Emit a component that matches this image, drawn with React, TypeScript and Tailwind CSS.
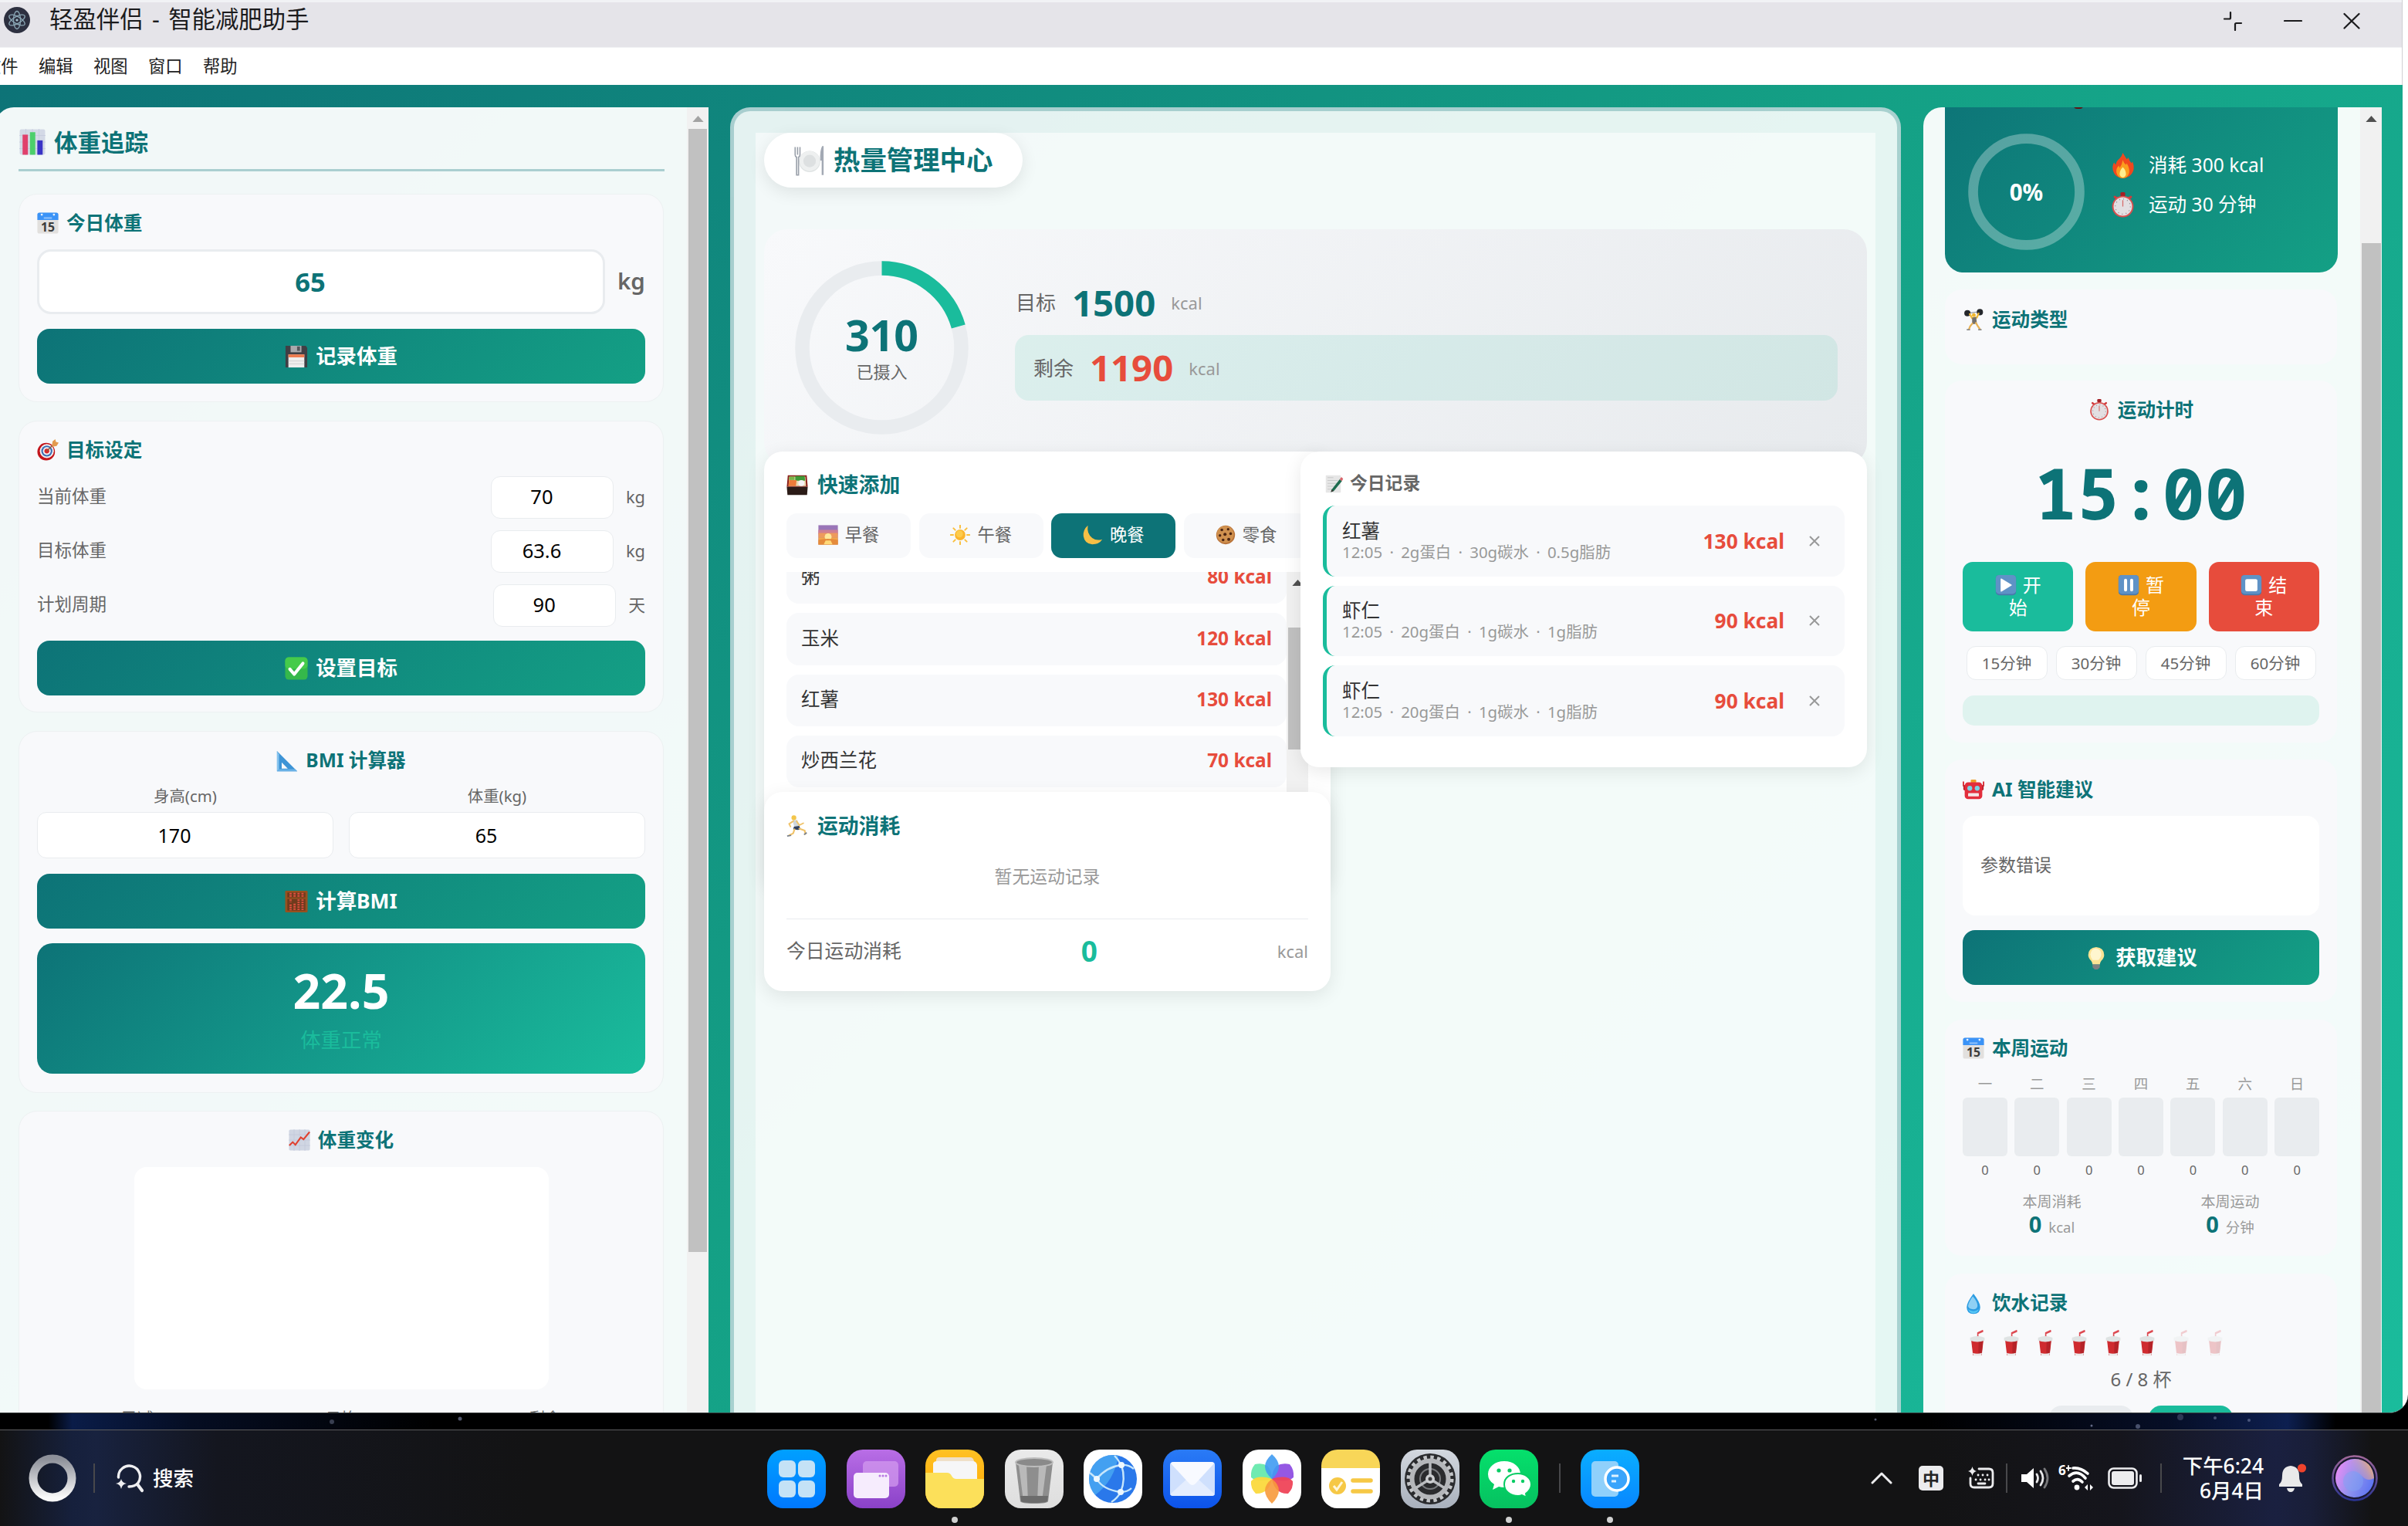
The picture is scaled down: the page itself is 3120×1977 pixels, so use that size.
import React from 'react'
import clsx from 'clsx'

/* ---------- emoji style glyphs ---------- */

type GlyphName =
  | 'bars' | 'calendar' | 'floppy' | 'target' | 'check' | 'ruler' | 'abacus' | 'trend'
  | 'plate' | 'bento' | 'sunrise' | 'sun' | 'moon' | 'cookie' | 'runner' | 'memo'
  | 'fire' | 'stopwatch' | 'lifter' | 'play' | 'pause' | 'stop' | 'robot' | 'bulb' | 'drop' | 'cup'

const BlueKey = ({ children }: { children: React.ReactNode }) => (
  <>
    <rect x="1" y="1" width="30" height="30" rx="5" fill="#4a78ab" />
    <rect x="1" y="1" width="30" height="28" rx="5" fill="#5f92c6" />
    {children}
  </>
)

const glyphs: Record<GlyphName, React.ReactNode> = {
  bars: (
    <>
      <rect x="0.5" y="0.5" width="31" height="31" rx="2" fill="#d3d9e6" />
      <path d="M0 8h32M0 16h32M0 24h32M8 0v32M16 0v32M24 0v32" stroke="#c2c9da" strokeWidth="0.7" />
      <rect x="4" y="7" width="6.5" height="24.5" fill="#e0406c" />
      <rect x="13" y="4" width="6.5" height="27.5" fill="#4ccf6b" />
      <rect x="22" y="14" width="6.5" height="17.5" fill="#3a34c6" />
    </>
  ),
  calendar: (
    <>
      <rect x="0.5" y="0.5" width="31" height="31" rx="3" fill="#e2e0de" />
      <path d="M.5 11.500v-8a3 3 0 0 1 3-3h25a3 3 0 0 1 3 3v8Z" fill="#3b93f7" />
      <circle cx="7" cy="3.5" r="1.6" fill="#e6f1fd" />
      <circle cx="25" cy="3.5" r="1.6" fill="#e6f1fd" />
      <path d="M10 8.500h12" stroke="#8cc0fa" strokeWidth="2.4" />
      <text x="16" y="28" textAnchor="middle" fontSize="18" fontWeight="700" fill="#3c3c3c">15</text>
    </>
  ),
  floppy: (
    <>
      <path d="M1 1h28l2 3v27H1Z" fill="#403f45" />
      <rect x="8" y="1" width="15" height="9" fill="#a9a9ad" />
      <rect x="17" y="2" width="4" height="6" fill="#55555a" />
      <rect x="5" y="13" width="22" height="18" fill="#f0eeee" />
      <rect x="5" y="13" width="22" height="4" fill="#ee7a4e" />
      <path d="M5 22h22M5 26h22" stroke="#c9c9c9" strokeWidth="0.8" />
    </>
  ),
  target: (
    <>
      <circle cx="13.5" cy="18.5" r="13" fill="#c3161c" />
      <circle cx="14.5" cy="17.5" r="10.4" fill="#f3f0f0" />
      <circle cx="14.5" cy="17.5" r="8.2" fill="#3b6fb5" />
      <circle cx="14.5" cy="17.5" r="5.8" fill="#f3f0f0" />
      <circle cx="14.5" cy="17.5" r="3.6" fill="#d8262c" />
      <path d="M14 18 26 6" stroke="#8d5a3a" strokeWidth="1.6" />
      <path d="m22 9 1-6 4-3 1 4 4 1-3 5-6 1Z" fill="#e39a4e" />
    </>
  ),
  check: (
    <>
      <rect x="0.5" y="0.5" width="31" height="31" rx="5" fill="#35b84b" />
      <rect x="0.5" y="0.5" width="31" height="16" rx="5" fill="#45cb4b" />
      <path d="m7 17 6 7L25 9" fill="none" stroke="#fff" strokeWidth="4.4" strokeLinecap="round" strokeLinejoin="round" />
    </>
  ),
  ruler: (
    <>
      <path d="M1 1v30h30Z" fill="#3d94d6" />
      <path d="M1 1v30l3-3V6Z" fill="#86c4ee" />
      <path d="M8 18v9h9Z" fill="#f8f9fb" />
      <path d="M1 31h30l-3-3H4Z" fill="#69b1e6" />
    </>
  ),
  abacus: (
    <>
      <rect x="0.5" y="1" width="31" height="30" rx="1.5" fill="#97511f" />
      <rect x="3.5" y="3.5" width="25" height="25" fill="#6f3b1d" />
      <path d="M8 4v6M13.500 4v6M19 4v6M24.500 4v6M8 13v4M13.500 19v9M19 13v15M24.500 13v15M8 20v8" stroke="#e0503f" strokeWidth="3" strokeDasharray="2 1.2" />
      <path d="M3 11.300h26" stroke="#97511f" strokeWidth="2" />
    </>
  ),
  trend: (
    <>
      <rect x="0.5" y="0.5" width="31" height="31" rx="2" fill="#d0d6e3" />
      <path d="M0 8h32M0 16h32M0 24h32M8 0v32M16 0v32M24 0v32" stroke="#bfc7d8" strokeWidth="0.7" />
      <path d="m1 24 5-5 4 4 8-11 4 3 9-11" fill="none" stroke="#e0402f" strokeWidth="2.4" />
    </>
  ),
  plate: (
    <>
      <circle cx="16" cy="17" r="11" fill="#dfe3e3" />
      <circle cx="16" cy="16.5" r="10.4" fill="#eef0f0" />
      <circle cx="16" cy="16.5" r="6.5" fill="#dde0e1" />
      <path d="M1 2v8q0 2 1.500 2.500V31h2V12.500Q6 12 6 10V2M3.500 2v8" fill="none" stroke="#9aa0aa" strokeWidth="1.3" />
      <path d="M29 1q-2.500 4-2 15h1.500v15h2V1Z" fill="#a3a9b4" />
    </>
  ),
  bento: (
    <>
      <path d="M2 2h28l1.500 17H.5Z" fill="#8a1f1a" />
      <path d="M.5 19h31l-1 12h-29Z" fill="#2b1b17" />
      <path d="M4 4h24l1 14H3Z" fill="#e9d9b0" />
      <path d="M13 3h14l.5 7H13Z" fill="#3e9a36" />
      <path d="M4 9h11l-1 9H3Z" fill="#ee7c3a" />
      <circle cx="22" cy="13.5" r="4.5" fill="#f4f1f4" />
      <path d="M4 4h8v5H4Z" fill="#79b548" />
    </>
  ),
  sunrise: (
    <>
      <rect x="0.5" y="0.5" width="31" height="31" fill="#9a76b8" />
      <rect x="0.5" y="8" width="31" height="7" fill="#cf7f92" />
      <rect x="0.5" y="13" width="31" height="7" fill="#ee9a5c" />
      <rect x="0.5" y="20" width="31" height="11.5" fill="#f4a648" />
      <circle cx="16" cy="19" r="5.5" fill="#ffe89a" />
      <path d="M.5 24q15-4 31 0v7.500H.5Z" fill="#e58b3b" />
      <path d="M12 25h8l3 6H9Z" fill="#ffd978" />
    </>
  ),
  sun: (
    <>
      <circle cx="16" cy="16" r="8.5" fill="#fbb52c" />
      <circle cx="15" cy="14.5" r="5.5" fill="#fdcb4c" />
      <path d="M16 1v4M16 27v4M1 16h4M27 16h4M5.400 5.400l2.800 2.800M23.800 23.800l2.800 2.800M26.600 5.400l-2.800 2.800M8.200 23.800l-2.800 2.800" stroke="#f9bf3d" strokeWidth="2.4" strokeLinecap="round" />
    </>
  ),
  moon: <path d="M8 1Q0 8 1 18q2 12 14 13 11 0 16-8-9 3-16-2Q6 14 8 1Z" fill="#f6bf45" />,
  cookie: (
    <>
      <circle cx="16" cy="16" r="15" fill="#b9733a" />
      <circle cx="15.5" cy="15" r="13.5" fill="#d0914f" />
      <g fill="#4c2613">
        <circle cx="10" cy="8" r="2.2" /><circle cx="20" cy="7" r="2" /><circle cx="7" cy="17" r="2.1" />
        <circle cx="15" cy="15" r="2.5" /><circle cx="24" cy="14" r="2.2" /><circle cx="12" cy="24" r="2.2" /><circle cx="21" cy="23" r="2.5" />
      </g>
    </>
  ),
  runner: (
    <>
      <circle cx="11" cy="4" r="3.6" fill="#f3c64b" />
      <path d="m9 8 7-1 3 10-7 2Z" fill="#cfd6dc" />
      <path d="m10 9-6 4 2 4M15 9l4 6 6-3" fill="none" stroke="#f0c36a" strokeWidth="2.2" strokeLinecap="round" />
      <path d="m11 17 8-1 2 5-4 1-7-1Z" fill="#32405e" />
      <path d="m19 20 8 3 1 5M12 21l-2 6-6 3" fill="none" stroke="#f0c36a" strokeWidth="2.4" strokeLinecap="round" />
      <path d="m26 29 4-3M1 31l6-1" stroke="#777f8c" strokeWidth="2" />
    </>
  ),
  memo: (
    <>
      <rect x="1" y="1" width="26" height="30" rx="1" fill="#e6e6e6" />
      <path d="M4 5h10M4 10h18M4 15h16M4 20h12M4 25h14" stroke="#c6c6c6" strokeWidth="1.2" />
      <path d="m11 26 14-18 4 3-14 17-5 2Z" fill="#1d6b4e" />
      <path d="m25 8 3-4 3 3-2 4Z" fill="#d9636a" />
      <path d="m11 26-1 4 5-2Z" fill="#3a3330" />
    </>
  ),
  fire: (
    <>
      <path d="M16 0q3 5 5 8l2-2q1 4 4 7l1-2q3 6 1 12-3 8-13 9Q6 31 4 23q-2-6 1-11l2 3q1-5 5-8 3-3 4-7Z" fill="#f0481e" />
      <path d="M16 9q1 4 4 6l1-2q4 7 3 12-2 7-8 7T8 25q-1-5 3-9l1 3q3-4 4-10Z" fill="#fb9d1e" />
      <path d="M16 18q4 4 4 9-1 4-4 4t-4-4q0-5 4-9Z" fill="#ffee8e" />
    </>
  ),
  stopwatch: (
    <>
      <rect x="13" y="0" width="6" height="5" rx="1.5" fill="#a32025" />
      <path d="m6 6 3 2M26 6l-3 2" stroke="#cf3a3c" strokeWidth="3" strokeLinecap="round" />
      <circle cx="16" cy="18" r="13.5" fill="#d8504f" />
      <circle cx="16" cy="18" r="11.6" fill="#e3dfe2" />
      <circle cx="16" cy="18" r="9.5" fill="none" stroke="#8f8c90" strokeWidth="1.2" strokeDasharray="1 4" />
      <path d="M16 18V10" stroke="#d66a68" strokeWidth="1.2" />
    </>
  ),
  lifter: (
    <>
      <path d="M5 7 27 4" stroke="#8a8f96" strokeWidth="1.4" />
      <circle cx="7" cy="6.5" r="4.6" fill="#24272c" />
      <circle cx="25.5" cy="5" r="4.6" fill="#24272c" />
      <path d="m10 7 4 7 7-1 3-7" fill="none" stroke="#efb83a" strokeWidth="2.6" />
      <circle cx="16.5" cy="9.5" r="2.8" fill="#f0b62f" />
      <path d="m14 13 6-1 1 10-7 1Z" fill="#74706c" />
      <path d="m15 21-4 5-2 5M19 20l3 5 4 6" fill="none" stroke="#e8b357" strokeWidth="2.6" />
      <path d="M6 31h5M23 31h5" stroke="#8c8c8c" strokeWidth="1.8" />
    </>
  ),
  play: <BlueKey><path d="M9 7v18l15-9Z" fill="#fff" stroke="#fff" strokeWidth="1.5" strokeLinejoin="round" /></BlueKey>,
  pause: <BlueKey><path d="M11.500 9v14M20.500 9v14" stroke="#fff" strokeWidth="4.6" strokeLinecap="round" /></BlueKey>,
  stop: <BlueKey><rect x="7" y="7" width="18" height="18" rx="2.5" fill="#fff" /></BlueKey>,
  robot: (
    <>
      <rect x="12" y="1" width="8" height="5" rx="1.5" fill="#f0a02c" />
      <path d="M1 4v7M31 4v7" stroke="#d9313a" strokeWidth="2.4" />
      <rect x="1" y="9" width="30" height="8" rx="2" fill="#b9202b" />
      <rect x="3" y="5" width="26" height="25" rx="5" fill="#e22e3c" />
      <circle cx="10.5" cy="14" r="3.6" fill="#79d3e6" />
      <circle cx="21.5" cy="14" r="3.6" fill="#79d3e6" />
      <rect x="8" y="21" width="16" height="5" rx="1" fill="#f4e6e6" />
    </>
  ),
  bulb: (
    <>
      <path d="M16 1q11 1 11 11 0 4-4 8-2 3-2 5H11q0-2-2-5-4-4-4-8Q5 2 16 1Z" fill="#fbe394" />
      <path d="M15 3q8 1 8 8 0 4-4 8H11q-3-4-3-8 1-7 7-8Z" fill="#fff6cf" />
      <path d="M11 25h10v4l-3 3h-4l-3-3Z" fill="#7d7f80" />
    </>
  ),
  drop: (
    <>
      <path d="M16 1q10 13 10 20 0 10-10 10T6 21Q6 14 16 1Z" fill="#2b9ce2" />
      <path d="M15 5q7 8 7 14-1 6-8 5-6-1-6-5 1-6 7-14Z" fill="#8fd0f4" />
      <path d="M8 24q8 6 16 0-2 6-8 6t-8-6Z" fill="#56c6f5" />
    </>
  ),
  cup: (
    <>
      <path d="M17 12V4l11-3" fill="none" stroke="#dd4a52" strokeWidth="2.6" />
      <path d="M3 11h26l-4 20H7Z" fill="#cf2b2f" />
      <path d="M19 11h9l-3 19h-7Z" fill="#b52328" />
      <path d="M1 9.500q15-4 30 0V13q-15 3-30 0Z" fill="#dfe3e3" />
      <path d="M6.500 28q9 2 19 0l-1 3.500H8Z" fill="#eceaea" />
    </>
  ),
}

const Glyph = ({ name, className }: { name: GlyphName; className?: string }) => (
  <svg viewBox="0 0 32 32" preserveAspectRatio="none" className={clsx('shrink-0', className ?? 'h-7 w-7')}>
    {glyphs[name]}
  </svg>
)

/* ---------- shared pieces ---------- */

const Heading = ({ icon, children, className }: { icon: GlyphName; children: React.ReactNode; className?: string }) => (
  <h3 className={clsx('flex shrink-0 items-center gap-[10px] text-[24.6px] leading-none font-bold text-[#0d7377]', className)}>
    <Glyph name={icon} />
    <span>{children}</span>
  </h3>
)

const PrimaryButton = ({ icon, children }: { icon: GlyphName; children: React.ReactNode }) => (
  <button
    type="button"
    className="flex h-[71px] w-full shrink-0 items-center justify-center gap-[10px] rounded-[16px] bg-linear-[135deg,#0d7377,#14a085] text-[26.4px] leading-none font-bold text-white"
  >
    <Glyph name={icon} className="h-[30px] w-[30px]" />
    {children}
  </button>
)

const Triangle = ({ className }: { className: string }) => (
  <svg viewBox="0 0 16 9" className={clsx('h-2 w-[15px]', className)}>
    <path d="M0 9 8 0l8 9Z" fill="currentColor" />
  </svg>
)

/* ---------- window chrome ---------- */

const menus = ['文件', '编辑', '视图', '窗口', '帮助']

function TitleBar() {
  return (
    <header className="w-[3113px] shrink-0 border-r border-[#cfcfd3]">
      <div className="flex h-[62px] items-start border-t-[3px] border-b border-[#f1f2f5] bg-[#e5e4e9] pl-[5px] text-[#1b1b1d]">
        <svg viewBox="0 0 34 34" className="mt-[6px] h-[34px] w-[34px]">
          <circle cx="17" cy="17" r="17" fill="#2d3040" />
          <g fill="none" stroke="#8aa6b4" strokeWidth="1.3">
            <ellipse cx="17" cy="17" rx="4.5" ry="11.5" />
            <ellipse cx="17" cy="17" rx="4.5" ry="11.5" transform="rotate(60 17 17)" />
            <ellipse cx="17" cy="17" rx="4.5" ry="11.5" transform="rotate(-60 17 17)" />
          </g>
          <circle cx="17" cy="17" r="1.6" fill="#a5c3cf" />
        </svg>
        <h1 className="ml-[25px] flex h-[45px] items-center text-[30.4px] leading-none [word-spacing:3.5px]">轻盈伴侣 - 智能减肥助手</h1>
        <div className="mt-[11px] mr-[54px] ml-auto flex items-center gap-[53px]">
          <svg viewBox="0 0 26 26" className="h-[26px] w-[26px]" fill="none" stroke="#1b1b1d" strokeWidth="2.2" strokeLinecap="round">
            <path d="M2 10.500h6.500a1.500 1.500 0 0 0 1.500-1.500V2M24 16h-6.500a1.500 1.500 0 0 0-1.500 1.500V25" />
          </svg>
          <svg viewBox="0 0 24 26" className="h-[26px] w-6" stroke="#1b1b1d" strokeWidth="2.2" strokeLinecap="round">
            <path d="M1 13h22" />
          </svg>
          <svg viewBox="0 0 22 26" className="h-[26px] w-[22px]" stroke="#1b1b1d" strokeWidth="2.2" strokeLinecap="round">
            <path d="m1.500 4 19 18.500M20.500 4l-19 18.500" />
          </svg>
        </div>
      </div>
      <nav className="flex h-12 items-center overflow-hidden bg-white text-[22.3px] leading-none text-[#222]">
        <ul className="-ml-[21px] flex gap-[26.4px]">
          {menus.map((m) => (
            <li key={m} className="shrink-0">{m}</li>
          ))}
        </ul>
      </nav>
    </header>
  )
}

/* ---------- left: weight tracking ---------- */

const goals = [
  { label: '当前体重', value: '70', unit: 'kg' },
  { label: '目标体重', value: '63.6', unit: 'kg' },
  { label: '计划周期', value: '90', unit: '天' },
]

const card = 'flex w-[836px] shrink-0 flex-col rounded-[24px] border border-[#edf1f2] bg-[#f8f9fb] px-[23px]'

function WeightPanel() {
  return (
    <section className="-ml-[6px] flex w-[924px] shrink-0 overflow-hidden rounded-tl-[24px] bg-white/95">
      <div className="flex w-[896px] flex-col pl-[30px]">
        <h2 className="flex h-[83px] w-[837px] shrink-0 items-center gap-[11px] border-b-[3px] border-[#aacfd0] pt-[10px] text-[30.5px] leading-none font-bold text-[#0d7377]">
          <Glyph name="bars" className="ml-[1px] h-[34px] w-[34px]" />
          体重追踪
        </h2>

        <div className={clsx(card, 'mt-[29px] h-[270px]')}>
          <Heading icon="calendar" className="h-[71px] pt-[3px]">今日体重</Heading>
          <div className="flex items-center">
            <div className="flex h-[84px] w-[736px] items-center justify-center rounded-[18px] border-[3px] border-[#e9ecef] bg-white pr-[28px] text-[34.5px] leading-none font-bold text-[#0d7377]">
              65
            </div>
            <span className="ml-4 pb-[2px] text-[29.5px] leading-none font-semibold text-[#666]">kg</span>
          </div>
          <div className="mt-[19px]">
            <PrimaryButton icon="floppy">记录体重</PrimaryButton>
          </div>
        </div>

        <div className={clsx(card, 'mt-6 h-[378px]')}>
          <Heading icon="target" className="h-[71px] pt-[3px]">目标设定</Heading>
          <div className="flex flex-col gap-[15px]">
            {goals.map((g) => (
              <div key={g.label} className="flex h-[55px] items-center text-[22.5px] leading-none text-[#666]">
                <span className="mr-auto pb-[2px]">{g.label}</span>
                <span className="flex h-[55px] w-[159px] items-center justify-center rounded-[12px] border border-[#e9ecef] bg-white pr-[27px] pb-[2px] text-[25.5px] text-black">
                  {g.value}
                </span>
                <span className="ml-4 pb-[2px] text-[21.8px]">{g.unit}</span>
              </div>
            ))}
          </div>
          <div className="mt-[18px]">
            <PrimaryButton icon="check">设置目标</PrimaryButton>
          </div>
        </div>

        <div className={clsx(card, 'mt-6 h-[469px]')}>
          <Heading icon="ruler" className="h-[67px] justify-center pt-2">BMI 计算器</Heading>
          <div className="flex gap-5">
            {[['身高(cm)', '170'], ['体重(kg)', '65']].map(([label, value]) => (
              <label key={label} className="flex flex-1 flex-col items-center">
                <span className="flex h-8 items-center text-[20.4px] leading-none text-[#666]">{label}</span>
                <span className="mt-[5px] flex h-[60px] w-full items-center justify-center rounded-[12px] border border-[#e9ecef] bg-white pr-[28px] text-[25px] leading-none text-black">
                  {value}
                </span>
              </label>
            ))}
          </div>
          <div className="mt-5">
            <PrimaryButton icon="abacus">计算BMI</PrimaryButton>
          </div>
          <div className="mt-[19px] flex h-[169px] flex-col items-center rounded-[20px] bg-linear-[135deg,#0d7377,#1abc9c]">
            <strong className="mt-[30px] flex h-[62px] items-center text-[62.5px] leading-none text-white">22.5</strong>
            <span className="mt-[19px] flex h-7 items-center text-[26.4px] leading-none text-[#1abc9c]">体重正常</span>
          </div>
        </div>

        <div className={clsx(card, 'mt-[23px] h-[500px]')}>
          <Heading icon="trend" className="h-[72px] justify-center pt-[2px]">体重变化</Heading>
          <div className="h-[288px] w-[537px] shrink-0 self-center rounded-[16px] bg-white" />
          <div className="mt-[27px] grid grid-cols-3 gap-1 text-center text-[20.5px] leading-none text-[#666]">
            <span>已减</span>
            <span>日均</span>
            <span>剩余</span>
          </div>
        </div>
      </div>
      <div className="flex w-7 flex-col items-center bg-[#f1f1f1] pt-[11px]">
        <Triangle className="shrink-0 text-[#a3a3a3]" />
        <div className="mt-[9px] h-[1455px] w-6 shrink-0 bg-[#c1c1c1]" />
      </div>
    </section>
  )
}

/* ---------- middle: calories ---------- */

const meals: { label: string; icon: GlyphName; active?: boolean }[] = [
  { label: '早餐', icon: 'sunrise' },
  { label: '午餐', icon: 'sun' },
  { label: '晚餐', icon: 'moon', active: true },
  { label: '零食', icon: 'cookie' },
]

const foods = [
  { name: '粥', kcal: 80 },
  { name: '玉米', kcal: 120 },
  { name: '红薯', kcal: 130 },
  { name: '炒西兰花', kcal: 70 },
]

const records = [
  { name: '红薯', detail: '12:05 · 2g蛋白 · 30g碳水 · 0.5g脂肪', kcal: 130 },
  { name: '虾仁', detail: '12:05 · 20g蛋白 · 1g碳水 · 1g脂肪', kcal: 90 },
  { name: '虾仁', detail: '12:05 · 20g蛋白 · 1g碳水 · 1g脂肪', kcal: 90 },
]

const RING = 2 * Math.PI * 103

function Summary() {
  return (
    <div className="mt-[54px] flex h-[306px] shrink-0 items-start rounded-[30px] bg-linear-[135deg,#f8f9fb,#e7eaed] pr-[38px] pl-10">
      <div className="mt-[41px] grid h-[225px] w-[225px] place-items-center">
        <svg viewBox="0 0 225 225" className="col-start-1 row-start-1 h-[225px] w-[225px]" fill="none" strokeWidth="18.5">
          <circle cx="112.5" cy="112.5" r="103" stroke="#e9ecef" />
          <circle cx="112.5" cy="112.5" r="103" stroke="#1abc9c" strokeDasharray={`${(RING * 310) / 1500} ${RING}`} transform="rotate(-90 112.5 112.5)" />
        </svg>
        <div className="col-start-1 row-start-1 flex flex-col items-center pb-[3px]">
          <strong className="text-[55.5px] leading-none text-[#0d7377]">310</strong>
          <span className="mt-[8px] text-[22px] leading-none text-[#666]">已摄入</span>
        </div>
      </div>
      <div className="mt-[53px] ml-[60px] flex flex-1 flex-col text-[26px] leading-none text-[#666]">
        <div className="flex h-[84px] items-center pl-[1px]">
          目标
          <strong className="ml-[21px] pb-[1px] text-[47.3px] text-[#0d7377]">1500</strong>
          <span className="ml-[20px] text-[22px] text-[#999]">kcal</span>
        </div>
        <div className="flex h-[85px] items-center rounded-[18px] bg-[#1abc9c]/11 pl-6">
          剩余
          <strong className="ml-[21px] pb-[1px] text-[47.3px] text-[#e74c3c]">1190</strong>
          <span className="ml-[20px] text-[22px] text-[#999]">kcal</span>
        </div>
      </div>
    </div>
  )
}

const floating = 'w-[734px] rounded-[24px] bg-white shadow-[0_6px_24px_rgba(0,0,0,0.09)]'

function QuickAdd() {
  return (
    <div className="h-[441px]">
      <div className={clsx(floating, 'flex h-[565px] flex-col px-[29px]')}>
        <Heading icon="bento" className="h-20 gap-[12px]! pt-[6px] text-[26.8px]!">快速添加</Heading>
        <div className="flex gap-[10.6px]">
          {meals.map((m) => (
            <button
              key={m.label}
              type="button"
              className={clsx(
                'flex h-[58px] flex-1 items-center justify-center gap-[9px] rounded-[14px] pb-[2px] text-[22.3px] leading-none',
                m.active ? 'bg-[#0d7377] text-white' : 'bg-[#f8f9fb] text-[#666]'
              )}
            >
              <Glyph name={m.icon} className="h-[26px] w-[26px]" />
              {m.label}
            </button>
          ))}
        </div>
        <div className="mt-[18px] flex h-[385px] overflow-hidden">
          <ul className="-mt-[26px] flex flex-1 flex-col gap-3">
            {foods.map((f) => (
              <li key={f.name} className="flex h-[67.3px] shrink-0 items-center justify-between rounded-[16px] bg-[#f8f9fb] px-[19px] pb-[2px] text-[24.5px] leading-none text-[#333]">
                {f.name}
                <strong className="text-[24.4px] text-[#e74c3c]">{f.kcal} kcal</strong>
              </li>
            ))}
          </ul>
          <div className="flex w-7 flex-col items-center bg-[#f1f1f1] pt-[10px]">
            <Triangle className="shrink-0 text-[#505050]" />
            <div className="mt-[54px] h-[158px] w-6 shrink-0 bg-[#c1c1c1]" />
          </div>
        </div>
      </div>
    </div>
  )
}

function TodayRecords() {
  return (
    <div className={clsx(floating, 'flex h-[409px] flex-col px-[29px]')}>
      <h3 className="flex h-[70px] items-center gap-2 pt-[13px] pl-[3px] text-[22.8px] leading-none font-bold text-[#666]">
        <Glyph name="memo" className="h-6 w-6" />
        今日记录
      </h3>
      <ul className="flex flex-col gap-3">
        {records.map((r, i) => (
          <li key={i} className="flex h-[91.5px] items-center rounded-[16px] border-l-[5px] border-[#1abc9c] bg-[#f8f9fb] pl-5">
            <div className="mr-auto flex flex-col">
              <span className="text-[24.5px] leading-[28px] text-[#333]">{r.name}</span>
              <span className="text-[20.4px] leading-[26px] text-[#999] [word-spacing:4px]">{r.detail}</span>
            </div>
            <strong className="text-[26.3px] leading-none text-[#e74c3c]">{r.kcal} kcal</strong>
            <svg viewBox="0 0 14 14" className="mr-[32px] ml-[32px] h-[14px] w-[14px]" stroke="#999" strokeWidth="2">
              <path d="m1 1 12 12M13 1 1 13" />
            </svg>
          </li>
        ))}
      </ul>
    </div>
  )
}

function Burned() {
  return (
    <div className={clsx(floating, 'flex h-[258px] flex-col px-[29px]')}>
      <Heading icon="runner" className="h-20 gap-[12px]! pt-[8px] text-[26.8px]!">运动消耗</Heading>
      <p className="flex h-[85px] items-center justify-center border-b border-[#e9ecef] pb-[23px] text-[22.8px] leading-none text-[#999]">暂无运动记录</p>
      <div className="flex h-[81px] items-center justify-between text-[24.8px] leading-none text-[#666]">
        今日运动消耗
        <strong className="text-[37px] text-[#1abc9c]">0</strong>
        <span className="text-[22px] text-[#999]">kcal</span>
      </div>
    </div>
  )
}

function CaloriePanel() {
  return (
    <main className="ml-7 w-[1517px] shrink-0 overflow-hidden rounded-t-[26px] border-x-[5px] border-t-[5px] border-[#0d7377]/28 bg-white/89 px-7 pt-7">
      <div className="flex h-full flex-col bg-white/55 px-[11px]">
        <h2 className="flex h-[71px] shrink-0 items-center gap-[11px] self-start rounded-full bg-white px-[39px] text-[34.4px] leading-none font-bold text-[#0d7377] shadow-[0_6px_22px_rgba(0,0,0,0.09)]">
          <Glyph name="plate" className="h-10 w-10" />
          热量管理中心
        </h2>
        <Summary />
        <div className="-mt-[18px] grid grid-cols-[695px_734px] grid-rows-[441px_258px]">
          <QuickAdd />
          <TodayRecords />
          <Burned />
        </div>
      </div>
    </main>
  )
}

/* ---------- right: exercise ---------- */

const controls: { icon: GlyphName; text: string; color: string }[] = [
  { icon: 'play', text: '开始', color: 'bg-[#1abc9c]' },
  { icon: 'pause', text: '暂停', color: 'bg-[#f39c12]' },
  { icon: 'stop', text: '结束', color: 'bg-[#e74c3c]' },
]

const side = 'flex w-[508px] shrink-0 flex-col rounded-[22px] bg-[#f8f9fb] px-[23px]'

function ExercisePanel() {
  return (
    <section className="ml-[29px] flex w-[594px] shrink-0 overflow-hidden rounded-tl-[24px] bg-white/95">
      <div className="flex w-[566px] flex-col pl-7">
        <div className="-mt-[40px] flex h-[254px] w-[509px] shrink-0 items-start rounded-[24px] bg-linear-[135deg,#0d7377,#14a085] pl-[30px] text-white">
          <div className="mt-[74px] grid h-[151px] w-[151px] place-items-center">
            <svg viewBox="0 0 150 150" className="col-start-1 row-start-1 h-[151px] w-[151px]" fill="none">
              <circle cx="75" cy="75" r="68.5" stroke="#fff" strokeOpacity="0.3" strokeWidth="12.6" />
            </svg>
            <strong className="col-start-1 row-start-1 text-[29.5px] leading-none">0%</strong>
          </div>
          <div className="mt-[98px] ml-[33px] flex flex-col gap-[17px] text-[24.6px] leading-none">
            <div className="flex h-[34px] items-center gap-[17px]"><Glyph name="fire" className="h-[33px] w-[33px]" />消耗 300 kcal</div>
            <div className="flex h-[34px] items-center gap-[17px]"><Glyph name="stopwatch" className="h-[33px] w-[33px]" />运动 30 分钟</div>
          </div>
          {/* foot of the title icon above, cut by the scroll edge */}
          <i className="-ml-[246px] mt-[34px] h-[8px] w-3 shrink-0 rounded-full bg-[#5e1414]" />
        </div>

        <div className={clsx(side, 'mt-[22px] h-[97px]')}>
          <Heading icon="lifter" className="h-[76px] pt-[2px]">运动类型</Heading>
        </div>

        <div className={clsx(side, 'mt-[21px] h-[469px]')}>
          <Heading icon="stopwatch" className="h-[76px] justify-center">运动计时</Heading>
          <div className="flex h-[159px] items-center justify-center pb-[21px] font-['Noto_Sans_Mono','DejaVu_Sans_Mono',monospace] text-[92px] leading-none font-bold text-[#0d7377]">
            15:00
          </div>
          <div className="flex gap-4">
            {controls.map((c) => (
              <button key={c.icon} type="button" className={clsx('flex h-[90px] flex-1 flex-col items-center justify-center rounded-[13px] pb-[2px] text-[24px] leading-[29px] text-white', c.color)}>
                <span className="flex items-center gap-2"><Glyph name={c.icon} />{c.text[0]}</span>
                <span>{c.text[1]}</span>
              </button>
            ))}
          </div>
          <div className="mt-[19px] flex justify-center gap-[11px]">
            {[15, 30, 45, 60].map((m) => (
              <button key={m} type="button" className="h-11 w-[105px] rounded-[12px] border border-[#e9ecef] bg-white text-[20.5px] leading-none text-[#666]">
                {m}分钟
              </button>
            ))}
          </div>
          <div className="mt-5 h-[39px] rounded-[15px] bg-[#dff3ef]" />
        </div>

        <div className={clsx(side, 'mt-[22px] h-[314px]')}>
          <Heading icon="robot" className="h-[73px] pt-[5px]">AI 智能建议</Heading>
          <div className="flex h-[129px] items-center rounded-[16px] bg-white px-[23px] pb-[2px] text-[23px] leading-none text-[#666]">参数错误</div>
          <div className="mt-[19px]">
            <PrimaryButton icon="bulb">获取建议</PrimaryButton>
          </div>
        </div>

        <div className={clsx(side, 'mt-[23px] h-[306px]')}>
          <Heading icon="calendar" className="h-[72px] pt-[2px]">本周运动</Heading>
          <div className="grid grid-cols-7 gap-[9.6px]">
            {['一', '二', '三', '四', '五', '六', '日'].map((d) => (
              <div key={d} className="flex flex-col items-center leading-none">
                <span className="flex h-[22px] items-center text-[18.5px] text-[#999]">{d}</span>
                <span className="mt-[7px] h-[76px] w-full rounded-[6px] bg-[#e9ecef]" />
                <span className="flex h-9 items-center text-[16.5px] text-[#666]">0</span>
              </div>
            ))}
          </div>
          <div className="mt-[10px] grid grid-cols-2">
            {[['本周消耗', 'kcal'], ['本周运动', '分钟']].map(([label, unit]) => (
              <div key={label} className="flex flex-col items-center leading-none text-[#999]">
                <span className="flex h-[26px] items-center text-[19px]">{label}</span>
                <span className="flex h-[34px] items-baseline gap-[9px] pt-[1px] text-[18.5px]">
                  <strong className="text-[29px] text-[#0d7377]">0</strong>
                  {unit}
                </span>
              </div>
            ))}
          </div>
        </div>

        <div className={clsx(side, 'mt-[23px] h-[300px]')}>
          <Heading icon="drop" className="h-[73px] pt-1">饮水记录</Heading>
          <div className="flex gap-3 pl-[3px]">
            {Array.from({ length: 8 }, (_, i) => (
              <span key={i} className={clsx('flex w-8 justify-center', i > 5 && 'opacity-25')}>
                <Glyph name="cup" className="h-[34px] w-[20px]" />
              </span>
            ))}
          </div>
          <p className="flex h-[60px] items-center justify-center text-[24px] leading-none text-[#666]">6 / 8 杯</p>
          <div className="mt-1 flex justify-center gap-5">
            <button type="button" className="h-12 w-[109px] rounded-[16px] bg-[#e9ecef]" />
            <button type="button" className="h-12 w-[109px] rounded-[16px] bg-[#1abc9c]" />
          </div>
        </div>
      </div>
      <div className="flex w-7 flex-col items-center bg-[#f1f1f1] pt-[11px]">
        <Triangle className="shrink-0 text-[#505050]" />
        <div className="mt-[157px] h-[1600px] w-[25px] shrink-0 bg-[#c1c1c1]" />
      </div>
    </section>
  )
}

/* ---------- taskbar ---------- */

type TileInfo = { name: string; bg: string; running?: boolean; art: React.ReactNode }

const tiles: TileInfo[] = [
  {
    name: 'launcher',
    bg: 'bg-linear-[180deg,#00a0ff,#0078ff]',
    art: (
      <g fill="#c4e2f6">
        <rect x="15" y="14" width="22" height="22" rx="6" /><rect x="40" y="14" width="22" height="22" rx="6" />
        <rect x="15" y="40" width="22" height="22" rx="6" /><rect x="40" y="40" width="22" height="22" rx="6" />
      </g>
    ),
  },
  {
    name: 'windows',
    bg: 'bg-linear-[180deg,#b96ee6,#8a41c8]',
    art: (
      <>
        <rect x="21" y="15" width="46" height="33" rx="5" fill="#d49df0" opacity="0.7" />
        <rect x="9" y="30" width="46" height="33" rx="5" fill="#f6ecfd" />
        <g fill="#b877e2"><circle cx="43" cy="34" r="1.5" /><circle cx="47" cy="34" r="1.5" /><circle cx="51" cy="34" r="1.5" /></g>
      </>
    ),
  },
  {
    name: 'files',
    bg: 'bg-linear-[180deg,#ffc124,#ffa800]',
    running: true,
    art: (
      <>
        <path d="M14 14q0-4 4-4h40q4 0 5 5v30H12Z" fill="#efe0c8" />
        <path d="M10 18q1-3 5-3h46q5 0 6 5v28H10Z" fill="#f6f6f7" />
        <path d="M0 30h28q4 0 6 4t6 4h36v20q0 18-18 18H18Q0 76 0 58Z" fill="#fce05a" />
      </>
    ),
  },
  {
    name: 'trash',
    bg: 'bg-linear-[180deg,#eaeaea,#dedede]',
    art: (
      <>
        <path d="m14 17 6 50q1 3 18 3t18-3l6-50Z" fill="#8e8e8e" />
        <path d="m18 20 6 47h6l-2-47Zm36 0-6 47h-6l2-47Z" fill="#b9b9b9" />
        <path d="M20 60h36l-1 7q-3 2-17 2t-17-2Z" fill="#6c6c6c" />
        <ellipse cx="38" cy="16.5" rx="24" ry="5.5" fill="#8a8a8a" stroke="#bdbdbd" strokeWidth="2" />
      </>
    ),
  },
  {
    name: 'browser',
    bg: 'bg-white',
    art: (
      <>
        <circle cx="38" cy="38" r="31" fill="#2a78ea" />
        <path d="M38 7a31 31 0 0 0-31 31q0 12 8 21Q40 40 45 8Z" fill="#4fb0f4" opacity="0.7" />
        <g fill="none" stroke="#c6e6fb" strokeWidth="2.4">
          <path d="M8 30q6 5 9 8 12-15 31-18 10-1 17 5M17 38q8 14 31 17 9 0 14-5M49 20q6 18-1 35M48 20q-2-6-8-12M48 55q-4 8-12 13" />
        </g>
        <g fill="#eef8ff"><circle cx="17" cy="38" r="4" /><circle cx="49" cy="20" r="4" /><circle cx="48" cy="55" r="4" /></g>
      </>
    ),
  },
  {
    name: 'mail',
    bg: 'bg-linear-[180deg,#2a7bf6,#0c53ea]',
    art: (
      <>
        <rect x="9" y="16" width="58" height="44" rx="4" fill="#cfe0fd" />
        <path d="m9 58 22-20h14l22 20q-1 2-4 2H13q-3 0-4-2Z" fill="#e4edfe" />
        <path d="M10 18q1-2 4-2h48q3 0 4 2L42 44q-4 4-8 0Z" fill="#f8faff" />
      </>
    ),
  },
  {
    name: 'gallery',
    bg: 'bg-white',
    art: (
      <>
        <path d="M38 38q-18 6-27-2-1-10 5-17 10-2 16 2 6 6 6 17Z" fill="#5fe8a8" opacity="0.9" />
        <path d="M38 38q0-11 6-17 7-4 17-2 6 7 5 17-9 8-28 2Z" fill="#8a46e0" opacity="0.9" />
        <path d="M38 38q19-6 27 3 1 9-6 16-17 1-21-19Z" fill="#ef4458" opacity="0.95" />
        <path d="M38 38q-4 20-21 19-7-7-6-16 8-9 27-3Z" fill="#fbd93d" opacity="0.95" />
        <path d="M38 38q18 14 0 32-18-18 0-32Z" fill="#f79a3c" opacity="0.9" />
        <path d="M38 6q18 16 0 32-18-16 0-32Z" fill="#3f9bf2" opacity="0.9" />
      </>
    ),
  },
  {
    name: 'notes',
    bg: 'bg-linear-[180deg,#f8d658_0_31%,#ffffff_31%_100%]',
    art: (
      <>
        <circle cx="21" cy="47" r="11" fill="#f6c845" />
        <path d="m16 47 4 5 7-10" fill="none" stroke="#fff6d8" strokeWidth="3" />
        <path d="M41 40h23M41 54h23" stroke="#f6c845" strokeWidth="5.5" strokeLinecap="round" />
      </>
    ),
  },
  {
    name: 'settings',
    bg: 'bg-linear-[180deg,#d3d8df,#a9b1bd]',
    art: (
      <>
        <circle cx="38" cy="38" r="33" fill="#2a2b2e" />
        <circle cx="38" cy="38" r="28" fill="none" stroke="#c3c5c8" strokeWidth="5" strokeDasharray="4.4 4.4" />
        <circle cx="38" cy="38" r="23.5" fill="none" stroke="#b4b6ba" strokeWidth="6" />
        <circle cx="38" cy="38" r="13" fill="none" stroke="#77797d" strokeWidth="2" />
        <path d="M38 38V16M38 38l19 12M38 38 19 50" stroke="#b9bbbf" strokeWidth="3.5" />
        <circle cx="38" cy="38" r="6" fill="#ccced1" /><circle cx="38" cy="38" r="2.5" fill="#3b3c3f" />
      </>
    ),
  },
  {
    name: 'chat',
    bg: 'bg-linear-[180deg,#05e06c,#06c160]',
    running: true,
    art: (
      <>
        <path d="M32 15c12 0 21 7.500 21 17S44 49 32 49q-4 0-7-1l-8 4 2-7q-8-5-8-13c0-9.500 9-17 21-17Z" fill="#fff" />
        <path d="M50 31c9 0 17 6 17 14 0 6-3 9-7 12l1 5-6-3q-2 1-5 1c-10 0-18-6-18-15s8-14 18-14Z" fill="#fff" stroke="#07cc63" strokeWidth="2" />
        <g fill="#07cc63"><circle cx="25" cy="27" r="2.6" /><circle cx="39" cy="27" r="2.6" /><circle cx="44" cy="41" r="2.2" /><circle cx="56" cy="41" r="2.2" /></g>
      </>
    ),
  },
]

const phoneTile: TileInfo = {
  name: 'phone',
  bg: 'bg-linear-[180deg,#0aaeff,#0886ff]',
  running: true,
  art: (
    <>
      <rect x="14" y="15" width="35" height="46" rx="5" fill="#8fd0fb" />
      <circle cx="47" cy="38" r="15" fill="#3aa4fb" stroke="#fff" strokeWidth="3.5" />
      <path d="M40 34h9M40 41h6" stroke="#dff1ff" strokeWidth="3" />
    </>
  ),
}

const Tile = ({ tile }: { tile: TileInfo }) => (
  <div className="flex w-[76px] flex-col items-center">
    <div className={clsx('h-[76px] w-[76px] overflow-hidden rounded-[21px]', tile.bg)}>
      <svg viewBox="0 0 76 76" className="h-[76px] w-[76px]">{tile.art}</svg>
    </div>
    {tile.running && <i className="mt-[11px] h-2 w-2 rounded-full bg-[#d0d0d0]" />}
  </div>
)

const Divider = ({ className }: { className?: string }) => <i className={clsx('h-[38px] w-[2px] shrink-0 bg-[#48484b]', className)} />

function Taskbar() {
  return (
    <footer className="flex h-[124px] shrink-0 bg-[#131314] bg-[linear-gradient(90deg,#131314_0,#16203c_3%,#18223f_4%,#14161f_9%,#131314_22%,#131314_80%,#15151c_88%,#1a2040_94.5%,#191e38_96%,#131314_98.5%)]">
      <div className="flex h-[124px] w-[994px] shrink-0 items-center pl-[37px]">
        <svg viewBox="0 0 62 62" className="h-[62px] w-[62px]">
          <defs>
            <linearGradient id="homeRing" x1="0" y1="0" x2="0" y2="1">
              <stop offset="0" stopColor="#8d9099" />
              <stop offset="1" stopColor="#fafafa" />
            </linearGradient>
          </defs>
          <circle cx="31" cy="31" r="25" fill="none" stroke="url(#homeRing)" strokeWidth="11" />
        </svg>
        <Divider className="ml-[22px]" />
        <svg viewBox="0 0 38 38" className="ml-[26px] h-[38px] w-[38px]" fill="none" stroke="#efeff1" strokeLinecap="round">
          <path d="M4.500 18A14 14 0 1 1 30 25Q26 30 18 30" strokeWidth="3.4" />
          <path d="m29 27 6 8" strokeWidth="4.2" />
          <path d="M8 20q1 5 7 6-6 1-7 7-1-6-7-7 6-1 7-6Z" fill="#efeff1" stroke="none" />
        </svg>
        <span className="ml-[11px] text-[26.5px] leading-none font-medium text-white">搜索</span>
      </div>

      <div className="flex shrink-0 gap-[26.6px] pt-[25px]">
        {tiles.map((t) => <Tile key={t.name} tile={t} />)}
      </div>
      <Divider className="mt-[43px] ml-[27px]" />
      <div className="ml-[26px] pt-[25px]"><Tile tile={phoneTile} /></div>

      <div className="ml-auto flex h-[124px] shrink-0 items-center pr-[39px]">
        <svg viewBox="0 0 28 16" className="h-4 w-7" fill="none" stroke="#ececee" strokeWidth="3" strokeLinecap="round" strokeLinejoin="round">
          <path d="M2 14 14 2l12 12" />
        </svg>
        <span className="ml-[34px] flex h-8 w-8 items-center justify-center rounded-[5px] bg-[#ececee] text-[22px] leading-none font-bold text-[#242426]">中</span>
        <svg viewBox="0 0 36 32" className="ml-[31px] h-8 w-9" fill="none" stroke="#ececee" strokeWidth="2.8" strokeLinecap="round">
          <path d="M15 4h13q5 0 5 5v14q0 5-5 5H9q-5 0-5-5v-7" />
          <path d="M14 12h.1M20 12h.1M26 12h.1M11 18h.1M17 18h.1M23 18h.1M28 18h.1M14 23h9" />
          <path d="M6.500 1q1 5 5.500 6-4.500 1-5.500 6Q5.500 8 1 7q4.500-1 5.500-6Z" fill="#ececee" stroke="none" />
        </svg>
        <Divider className="ml-[14px]" />
        <svg viewBox="0 0 40 30" className="ml-[17px] h-[30px] w-10" fill="none" strokeWidth="2.8" strokeLinecap="round">
          <path d="M1 10h7l9-8v26l-9-8H1Z" fill="#fff" />
          <path d="M21 10q3 5 0 10M26 6q6 9 0 18" stroke="#e8e8ea" />
          <path d="M31 3q8 12 0 24" stroke="#77777a" />
        </svg>
        <div className="ml-[9px] flex">
          <span className="-mt-[2px] text-[17px] leading-none font-bold text-white">6</span>
          <svg viewBox="0 0 38 34" className="h-[34px] w-[38px]" fill="none" stroke="#fff" strokeWidth="3.6" strokeLinecap="round">
            <path d="M9 4q10-1 19 7M4 14q11-9 21 3M9 21q6-5 12 1" />
            <circle cx="14" cy="29" r="3.4" fill="#fff" stroke="none" />
            <path d="M3 1v6M0 4h6" strokeWidth="1.8" />
            <path d="m28 25-4 4 4 4ZM31 25l4 4-4 4Z" fill="#fff" stroke="none" />
          </svg>
        </div>
        <svg viewBox="0 0 44 28" className="ml-[16px] h-7 w-11">
          <rect x="1.5" y="1.5" width="36" height="25" rx="6" fill="none" stroke="#ececee" strokeWidth="2.6" />
          <rect x="5" y="5" width="29" height="18" rx="3" fill="#ececee" />
          <rect x="41" y="9" width="3" height="10" rx="1.5" fill="#ececee" />
        </svg>
        <Divider className="ml-[24px]" />
        <div className="ml-[27px] flex flex-col items-end text-[26.4px] leading-[32px] font-medium text-white">
          <span>下午6:24</span>
          <span>6月4日</span>
        </div>
        <svg viewBox="0 0 36 38" className="ml-[20px] h-[38px] w-9">
          <path d="M15 3q11 1 11 13 0 8 4 11v3H0v-3q4-3 4-11Q4 4 15 3Z" fill="#e9e9ea" />
          <path d="M10 32h10q-1 5-5 5t-5-5Z" fill="#e9e9ea" />
          <circle cx="29.5" cy="6" r="5.6" fill="#f0432c" />
        </svg>
        <svg viewBox="0 0 60 60" className="ml-[32px] h-[60px] w-[60px]">
          <defs>
            <linearGradient id="orbFill" x1="0" y1="0.3" x2="1" y2="0.7">
              <stop offset="0" stopColor="#e78cf5" />
              <stop offset="0.5" stopColor="#8f92ee" />
              <stop offset="1" stopColor="#5b73f2" />
            </linearGradient>
            <linearGradient id="orbEdge" x1="0" y1="0" x2="0" y2="1">
              <stop offset="0" stopColor="#a0689a" />
              <stop offset="1" stopColor="#2a3392" />
            </linearGradient>
            <linearGradient id="orbGlow" x1="1" y1="0.2" x2="0" y2="0.6">
              <stop offset="0" stopColor="#fbb65c" />
              <stop offset="1" stopColor="#c58ff0" stopOpacity="0" />
            </linearGradient>
          </defs>
          <circle cx="30" cy="30" r="28.5" fill="#1a1830" stroke="url(#orbEdge)" strokeWidth="2.6" />
          <circle cx="30" cy="30" r="25" fill="url(#orbFill)" />
          <path d="M30 5q23 1 25 25-8 5-15-2-8-8-18-8-2-10 8-15Z" fill="url(#orbGlow)" />
          <circle cx="28" cy="34" r="13" fill="#7fa2f3" opacity="0.5" />
        </svg>
      </div>
    </footer>
  )
}

export default function App() {
  return (
    <div className="flex h-[1977px] w-[3120px] flex-col overflow-hidden bg-black font-['Noto_Sans','Noto_Sans_CJK_SC',sans-serif]">
      <div className="bg-linear-[90deg,#000_2%,#0a1c48_3%,#050d22_8%,#000_18%,#000_80%,#060e26_90%,#0d1f50_95%,#000_97%]">
        <div className="flex h-[1831px] flex-col overflow-hidden rounded-br-[24px] border-b border-[#3a3d3d] bg-white">
          <TitleBar />
          <div className="flex min-h-0 w-[3113px] flex-1 overflow-hidden bg-linear-[135deg,#0d7377,#14a085_50%,#1abc9c] pt-[29px]">
            <WeightPanel />
            <CaloriePanel />
            <ExercisePanel />
          </div>
        </div>
        <svg viewBox="0 0 3120 21" className="h-[21px] w-full" fill="#8a93b5">
          <circle cx="430" cy="11" r="3" opacity="0.4" />
          <circle cx="596" cy="7" r="2.5" opacity="0.6" />
          <circle cx="2430" cy="8" r="1.5" opacity="0.6" />
          <circle cx="2710" cy="16" r="1.5" opacity="0.7" />
          <circle cx="2770" cy="17" r="3" opacity="0.5" />
          <circle cx="2825" cy="5" r="4" opacity="0.3" />
          <circle cx="2870" cy="6" r="2" opacity="0.5" />
          <circle cx="2914" cy="9" r="2" opacity="0.5" />
        </svg>
      </div>
      <div className="h-px shrink-0 bg-[#5c5c5e]" />
      <Taskbar />
    </div>
  )
}
